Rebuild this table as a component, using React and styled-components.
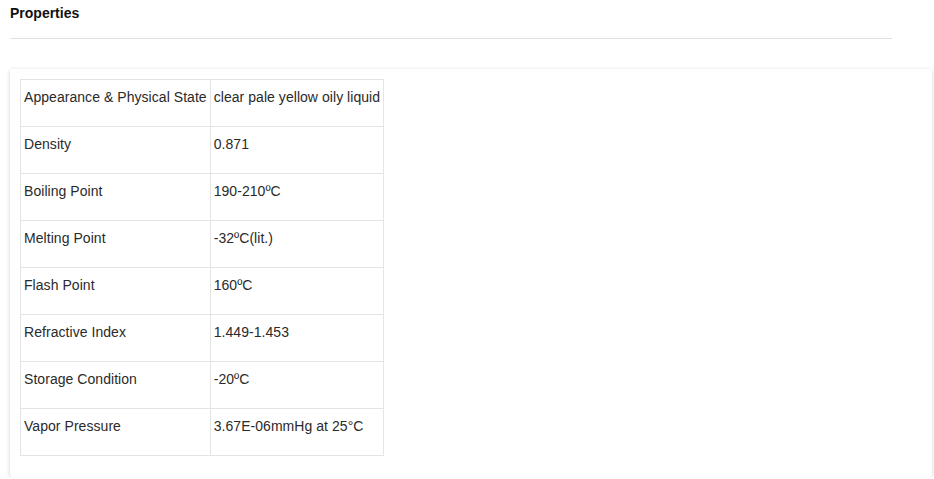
import styled, { createGlobalStyle } from "styled-components";

const GlobalStyle = createGlobalStyle`
  body {
    margin: 0;
    background: #fff;
    font-family: "Liberation Sans", Arial, sans-serif;
    color: #333;
  }
`;

const Page = styled.div`
  padding: 0 2px 0 10px;
`;

// Section heading with the rule under it
const Header = styled.div`
  width: 882px;
  height: 39px;
  padding-top: 5px;
  box-sizing: border-box;
  border-bottom: 1px solid #e2e2e2;
`;
const Title = styled.h3`
  margin: 0;
  font-size: 14px;
  font-weight: bold;
  color: #111;
`;

// Card holding the table
const Card = styled.div`
  margin-top: 30px;
  padding: 10px 10px 21px;
  background: #fff;
  border-radius: 3px;
  box-shadow: 0 1px 4px rgba(0, 0, 0, 0.18);
`;

const Table = styled.table`
  border-collapse: collapse;
  font-size: 14px;
  letter-spacing: 0.05px;
`;
const Cell = styled.td`
  border: 1px solid #e4e4e4;
  height: 47px;
  padding: 9px 3px 0;
  vertical-align: top;
  box-sizing: border-box;
  color: #2a2a2a;
  white-space: nowrap;
`;

const properties = [
  ["Appearance & Physical State", "clear pale yellow oily liquid"],
  ["Density", "0.871"],
  ["Boiling Point", "190-210ºC"],
  ["Melting Point", "-32ºC(lit.)"],
  ["Flash Point", "160ºC"],
  ["Refractive Index", "1.449-1.453"],
  ["Storage Condition", "-20ºC"],
  ["Vapor Pressure", "3.67E-06mmHg at 25°C"],
];

const App = () => {
  return (
    <>
      <GlobalStyle />
      <Page>
        <Header>
          <Title>Properties</Title>
        </Header>
        <Card>
          <Table>
            <tbody>
              {properties.map(([label, value]) => (
                <tr key={label}>
                  <Cell>{label}</Cell>
                  <Cell>{value}</Cell>
                </tr>
              ))}
            </tbody>
          </Table>
        </Card>
      </Page>
    </>
  );
};

export default App;
